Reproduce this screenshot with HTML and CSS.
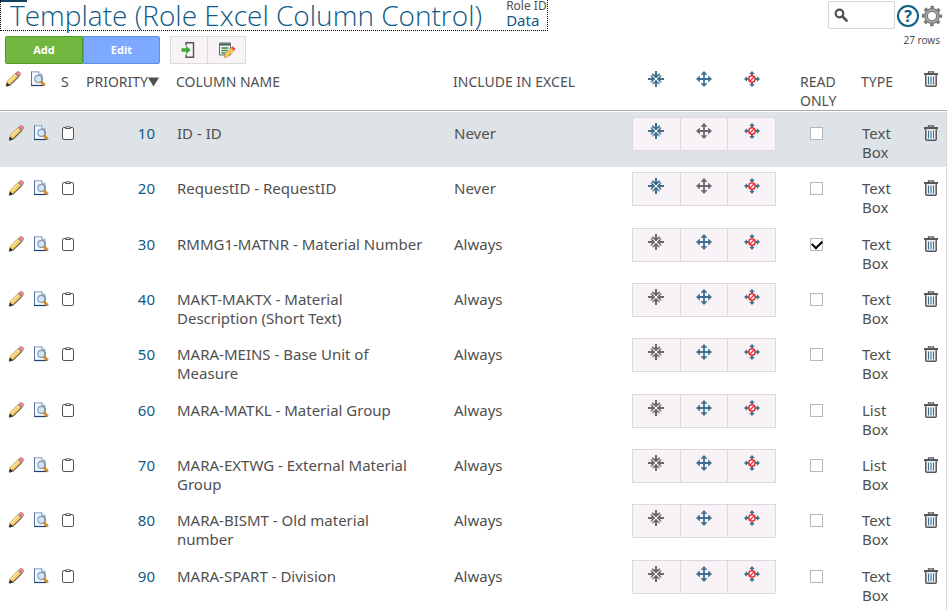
FILE: index.html
```
<!DOCTYPE html>
<html lang="en">
<head>
<meta charset="utf-8">
<title>Template (Role Excel Column Control)</title>
<link rel="stylesheet" href="styles.css">
</head>
<body>
<svg class="defs" aria-hidden="true">
  <symbol id="pencil" viewBox="0 0 16 16">
    <path d="M1 15l1.200-4.600L10.200 2.300l3.400 3.400L5.500 13.500z" fill="#f8c860" stroke="#a06c24" stroke-width=".5"/>
    <path d="M3.200 11.200l8-8" stroke="#fde6a6" stroke-width="1.300"/>
    <path d="M1 15l1.100-3.500 2.300 2.400z" fill="#222"/>
    <path d="M9.800 2.800l3.500 3.500 1-1-3.500-3.500z" fill="#8c8f96"/>
    <path d="M10.900 1.900l3.300 3.300c1.400-1 2.200-2.300 1.100-3.400l-.7-.8c-1.100-1-2.600-.5-3.700.9z" fill="#ee8a8a" stroke="#b85252" stroke-width=".5"/>
    <path d="M1.500 15.300l4-1.500 8.200-8" fill="none" stroke="#222" stroke-width=".9"/>
  </symbol>
  <symbol id="preview" viewBox="0 0 16 16">
    <path d="M1.500 .8h7.500l3 3v10.700h-10.500z" fill="#f3f7fc" stroke="#86a3c6" stroke-width="1"/>
    <path d="M1.500 .5v14" stroke="#52759f" stroke-width="1"/>
    <path d="M8.800 .8v3h3.200" fill="#fff" stroke="#5d7fa8" stroke-width=".8"/>
    <path d="M1 14.500h12.500" stroke="#22416e" stroke-width="1.200"/>
    <path d="M10.500 4.500c3 1 2.600 5 .8 6.500l-3 .5z" fill="#62707f"/>
    <circle cx="8.300" cy="7.900" r="3.500" fill="#cfe8f8" stroke="#8797ad" stroke-width="1.100"/>
    <path d="M11.500 11l2.700 2.800" stroke="#d08a26" stroke-width="2.600" stroke-linecap="round"/>
  </symbol>
  <symbol id="clip" viewBox="0 0 14 16">
    <rect x="1.500" y="2.500" width="11" height="12" rx="1.500" fill="#fff" stroke="#555" stroke-width="1"/>
    <path d="M4.500 3.500v-1.500h1.500q1-1.200 2 0h1.500v1.500z" fill="#fff" stroke="#555" stroke-width="1"/>
  </symbol>
  <symbol id="inward" viewBox="0 0 16 16">
    <g fill="currentColor">
      <path d="M7 0h2v3.500h1.500V2.500h1.500v1.500L8 7.500 4 4V2.500h1.500v1H7z"/>
      <path d="M7 0h2v3.500h1.500V2.500h1v1.300L8 7.300 4.500 3.800V2.500h1v1H7z" transform="rotate(90 8 8)"/>
      <path d="M7 0h2v3.500h1.500V2.500h1v1.300L8 7.300 4.500 3.800V2.500h1v1H7z" transform="rotate(180 8 8)"/>
      <path d="M7 0h2v3.500h1.500V2.500h1v1.300L8 7.300 4.500 3.800V2.500h1v1H7z" transform="rotate(270 8 8)"/>
    </g>
    <path d="M5.200 5.200l5.600 5.600m0-5.600l-5.600 5.600" stroke="#fff" stroke-width="1"/>
  </symbol>
  <symbol id="outward" viewBox="0 0 16 16">
    <path d="M8 0l3.500 3.800H8.900v3.300h3.300V4.500L16 8l-3.800 3.500V8.900H8.900v3.300h2.600L8 16l-3.500-3.800h2.600V8.900H3.800v2.600L0 8l3.800-3.500v2.600h3.300V3.800H4.500z" fill="currentColor"/>
  </symbol>
  <symbol id="blocked" viewBox="0 0 16 16">
    <path d="M8 0l2.800 3H9v2H7V3H5.200zM8 16l2.800-3H9v-2H7v2H5.200zM0 8l3-2.800V7h2v2H3v1.800zM16 8l-3-2.800V7h-2v2h2v1.800z" fill="#40708f"/>
    <circle cx="8" cy="8" r="3.200" fill="#fff" stroke="#e63438" stroke-width="1.500"/>
    <path d="M6 10l4-4" stroke="#e63438" stroke-width="1.200"/>
  </symbol>
  <symbol id="trash" viewBox="0 0 14 16">
    <path d="M4.500 2V.8h5V2" fill="none" stroke="#55565a" stroke-width="1.300"/>
    <path d="M0 2h14v2.200H0z" fill="#55565a"/>
    <path d="M1.800 4.200v10q0 1 1 1h8.400q1 0 1-1v-10" fill="#f4f5f6" stroke="#55565a" stroke-width="1.500"/>
    <path d="M4.500 5.500v8m2.500-8v8m2.500-8v8" stroke="#40708f" stroke-width="1.100"/>
  </symbol>
</svg>
<header class="top">
  <div class="heading">
    <h1>Template (Role Excel Column Control)</h1>
    <dl class="role"><dt>Role ID</dt><dd>Data</dd></dl>
  </div>
  <div class="tools">
    <label class="search"><svg viewBox="0 0 14 14"><circle cx="5.500" cy="5.500" r="3.800" fill="none" stroke="#505050" stroke-width="2.200"/><path d="M8.500 8.500l4 4" stroke="#505050" stroke-width="2.600" stroke-linecap="round"/></svg><input type="text" aria-label="Search"></label>
    <button class="help" aria-label="Help">?</button>
    <button class="gear" aria-label="Settings"><svg viewBox="0 0 22 22"><circle cx="11" cy="11" r="8.700" fill="none" stroke="#777" stroke-width="3" stroke-dasharray="3.400 3.433" stroke-dashoffset="1.700"/><circle cx="11" cy="11" r="6" fill="none" stroke="#777" stroke-width="4"/><circle cx="11" cy="11" r="6" fill="none" stroke="#a2a2a2" stroke-width="2"/></svg></button>
  </div>
</header>
<div class="bar">
  <div class="main-actions"><button class="add">Add</button><button class="edit">Edit</button></div>
  <div class="extra">
    <button aria-label="Import"><svg viewBox="0 0 18 18"><path d="M6 4.500V1.700h7.500v14.600H6V13.500" fill="none" stroke="#555" stroke-width="1.400"/><path d="M1.500 7.300H6V4.800L10.800 9 6 13.200v-2.500H1.500z" fill="#42a838"/></svg></button>
    <button aria-label="Edit list"><svg viewBox="0 0 18 18"><path d="M1.500 2h11v12h-11z" fill="#eef4ee" stroke="#5b6d64"/><path d="M2 3.500h10" stroke="#4a5a54" stroke-width="2"/><path d="M3.500 7h7M3.500 9.500h6M3.500 12h4" stroke="#3d8a4a" stroke-width="1.300"/><path d="M6 16.500l1.200-3.800 6-6 2.800 2.800-6 6z" fill="#f8c658" stroke="#b98228" stroke-width=".6"/><path d="M13.200 6.700l1.500-1.500 2.800 2.800L16 9.500z" fill="#e33c3c"/></svg></button>
  </div>
  <span class="count">27 rows</span>
</div>
<table>
  <colgroup><col class="c-pen"><col class="c-view"><col class="c-s"><col class="c-pri"><col class="c-name"><col class="c-inc"><col class="c-act"><col class="c-read"><col class="c-type"><col class="c-del"></colgroup>
  <thead>
    <tr>
      <th><svg class="ico" aria-label="Edit"><use href="#pencil"/></svg></th>
      <th><svg class="ico" aria-label="View"><use href="#preview"/></svg></th>
      <th>S</th>
      <th>PRIORITY<svg class="sort" viewBox="0 0 11 9"><path d="M0 0h11L5.500 9z" fill="#505050"/></svg></th>
      <th>COLUMN NAME</th>
      <th>INCLUDE IN EXCEL</th>
      <th><div class="trio blue"><span><svg class="ico"><use href="#inward"/></svg></span><span><svg class="ico"><use href="#outward"/></svg></span><span><svg class="ico"><use href="#blocked"/></svg></span></div></th>
      <th class="read">READ ONLY</th>
      <th>TYPE</th>
      <th><svg class="ico bin" aria-label="Delete"><use href="#trash"/></svg></th>
    </tr>
  </thead>
  <tbody id="rows"></tbody>
</table>
<script src="rows.js"></script>
</body>
</html>
```
FILE: styles.css
```
* { box-sizing: border-box; }
body { margin: 0; background: #fff; color: #505050; font: 15px/19px "Noto Sans", sans-serif; overflow: hidden; }
button { font: inherit; padding: 0; cursor: pointer; }
svg { display: block; }
.defs { width: 0; height: 0; position: absolute; }
.top { display: flex; justify-content: space-between; height: 31px; background: linear-gradient(#123f5a, #123f5a) 0 0 / 27px 2px no-repeat; }
.heading { display: flex; gap: 24px; padding-left: 9px; border: 1px dotted #000; border-top: 0; }
h1 { margin: 0; font: 300 28px/30px "Open Sans", sans-serif; color: #105a85; white-space: nowrap; }
.role { margin: 0; font-size: 12px; line-height: 11px; white-space: nowrap; }
.role dd { margin: 0; font-size: 15px; line-height: 19px; color: #105a85; }
.tools { display: flex; gap: 2px; padding: 1px 4px 0 0; align-items: flex-start; }
.search { display: flex; align-items: center; width: 67px; height: 28px; padding-left: 5px; border: 1px solid #d6d6d6; border-radius: 2px; }
.search svg { width: 14px; height: 14px; flex: none; }
.search input { min-width: 0; width: 100%; border: 0; outline: 0; background: none; }
.help { width: 22px; height: 22px; margin-top: 4px; border: 2px solid #105a85; border-radius: 50%; background: #fff; color: #105a85; font: bold 16px/18px "Open Sans", sans-serif; }
.gear { margin-top: 4px; border: 0; background: none; }
.gear svg { width: 22px; height: 22px; }
.bar { display: flex; padding: 5px 7px 0 5px; height: 33px; }
.main-actions, .extra { display: flex; height: 28px; }
.main-actions button { width: 78px; color: #fff; font: bold 11px/24px "Open Sans", sans-serif; border: 1px solid #4f9a2e; background: #72b840; border-radius: 2px 0 0 2px; }
.main-actions .edit { width: 77px; border-color: #5b90e4; background: #7daaff; border-radius: 0 2px 2px 0; }
.extra { margin-left: 10px; }
.extra button { display: grid; place-items: center; width: 38px; border: 1px solid #dcd8dc; background: #f7f3f7; }
.extra button + button { margin-left: -1px; width: 39px; }
.extra svg { width: 18px; height: 18px; }
.count { margin-left: auto; font-size: 10px; line-height: 8px; }
table { width: 100%; border-collapse: separate; border-spacing: 0; table-layout: fixed; }
th, td { padding: 0; text-align: left; vertical-align: top; font-weight: 400; }
.c-pen { width: 29px; } .c-view { width: 32px; } .c-s { width: 25px; } .c-pri { width: 90px; } .c-name { width: 277px; }
.c-inc { width: 179px; } .c-act { width: 144px; } .c-read { width: 85px; } .c-type { width: 61px; }
thead tr { height: 47px; }
th { padding-top: 8px; font-size: 14px; border-bottom: 1px solid #a8a4a8; }
th:nth-child(1) { padding: 7px 0 0 5px; }
th:nth-child(2) { padding: 7px 0 0 1px; }
th:nth-child(7), th:nth-child(10) { padding-top: 7px; }
th.read { padding-left: 24px; padding-right: 16px; }
.sort { display: inline-block; width: 11px; height: 10px; }
.ico { width: 16px; height: 16px; }
.bin { width: 14px; margin-left: 2px; }
.clip { width: 14px; }
.trio { display: flex; }
.trio > * { flex: 1; display: flex; justify-content: center; }
.blue { color: #40708f; }
td { padding-top: 12px; height: 55px; }
tbody tr:nth-child(3n+2) td { height: 56px; }
tbody .selected td { height: 56px; background: #dee3e7; border-top: 1px solid #fff; background-clip: padding-box; }
td:nth-child(1) { padding: 13px 0 0 8px; }
td:nth-child(2) { padding: 13px 0 0 4px; }
td:nth-child(3) { padding-top: 13px; }
td:nth-child(4) { padding-right: 21px; text-align: right; color: #105a85; }
td:nth-child(5) { padding-left: 1px; padding-right: 28px; }
td:nth-child(6) { padding-left: 1px; }
td:nth-child(7) { padding-top: 5px; }
td .trio button { height: 34px; padding-top: 5px; border: 1px solid #dcd8dc; background: #f7f3f7; color: #6d686d; }
td .trio button + button { border-left: 0; }
td .trio .on { color: #40708f; }
td:nth-child(8) { padding: 15px 0 0 34px; }
td:nth-child(9) { padding-left: 1px; padding-right: 20px; }
td:nth-child(10) { padding-top: 13px; border-right: 1px solid #d8d8d0; }
td input { appearance: none; display: grid; place-items: center; width: 13px; height: 13px; margin: 0; border: 1px solid #b8b8b8; background: #fff; }
td input:checked::after { content: ""; width: 8px; height: 5px; border: solid #000; border-width: 0 0 2px 2px; transform: rotate(-45deg); margin-bottom: 2px; }
.plain { border: 0; background: none; display: block; }
```
FILE: rows.js
```
const rows = [
  ["ID - ID", "Never", "Text Box"],
  ["RequestID - RequestID", "Never", "Text Box"],
  ["RMMG1-MATNR - Material Number", "Always", "Text Box"],
  ["MAKT-MAKTX - Material Description (Short Text)", "Always", "Text Box"],
  ["MARA-MEINS - Base Unit of Measure", "Always", "Text Box"],
  ["MARA-MATKL - Material Group", "Always", "List Box"],
  ["MARA-EXTWG - External Material Group", "Always", "List Box"],
  ["MARA-BISMT - Old material number", "Always", "Text Box"],
  ["MARA-SPART - Division", "Always", "Text Box"]
];
const icon = (name, extra = "") => `<svg class="ico ${extra}"><use href="#${name}"/></svg>`;
document.getElementById("rows").innerHTML = rows.map(([name, include, type], i) => {
  const never = include === "Never";
  return `<tr class="${i === 0 ? "selected" : ""}">
    <td><button class="plain" aria-label="Edit">${icon("pencil")}</button></td>
    <td><button class="plain" aria-label="View">${icon("preview")}</button></td>
    <td><button class="plain" aria-label="Copy">${icon("clip", "clip")}</button></td>
    <td>${(i + 1) * 10}</td><td>${name}</td><td>${include}</td>
    <td><div class="trio"><button class="${never ? "on" : ""}" aria-label="Never">${icon("inward")}</button><button class="${never ? "" : "on"}" aria-label="Always">${icon("outward")}</button><button aria-label="Block">${icon("blocked")}</button></div></td>
    <td><input type="checkbox" aria-label="Read only" ${i === 2 ? "checked" : ""}></td>
    <td>${type}</td>
    <td><button class="plain" aria-label="Delete">${icon("trash", "bin")}</button></td>
  </tr>`;
}).join("");
```
